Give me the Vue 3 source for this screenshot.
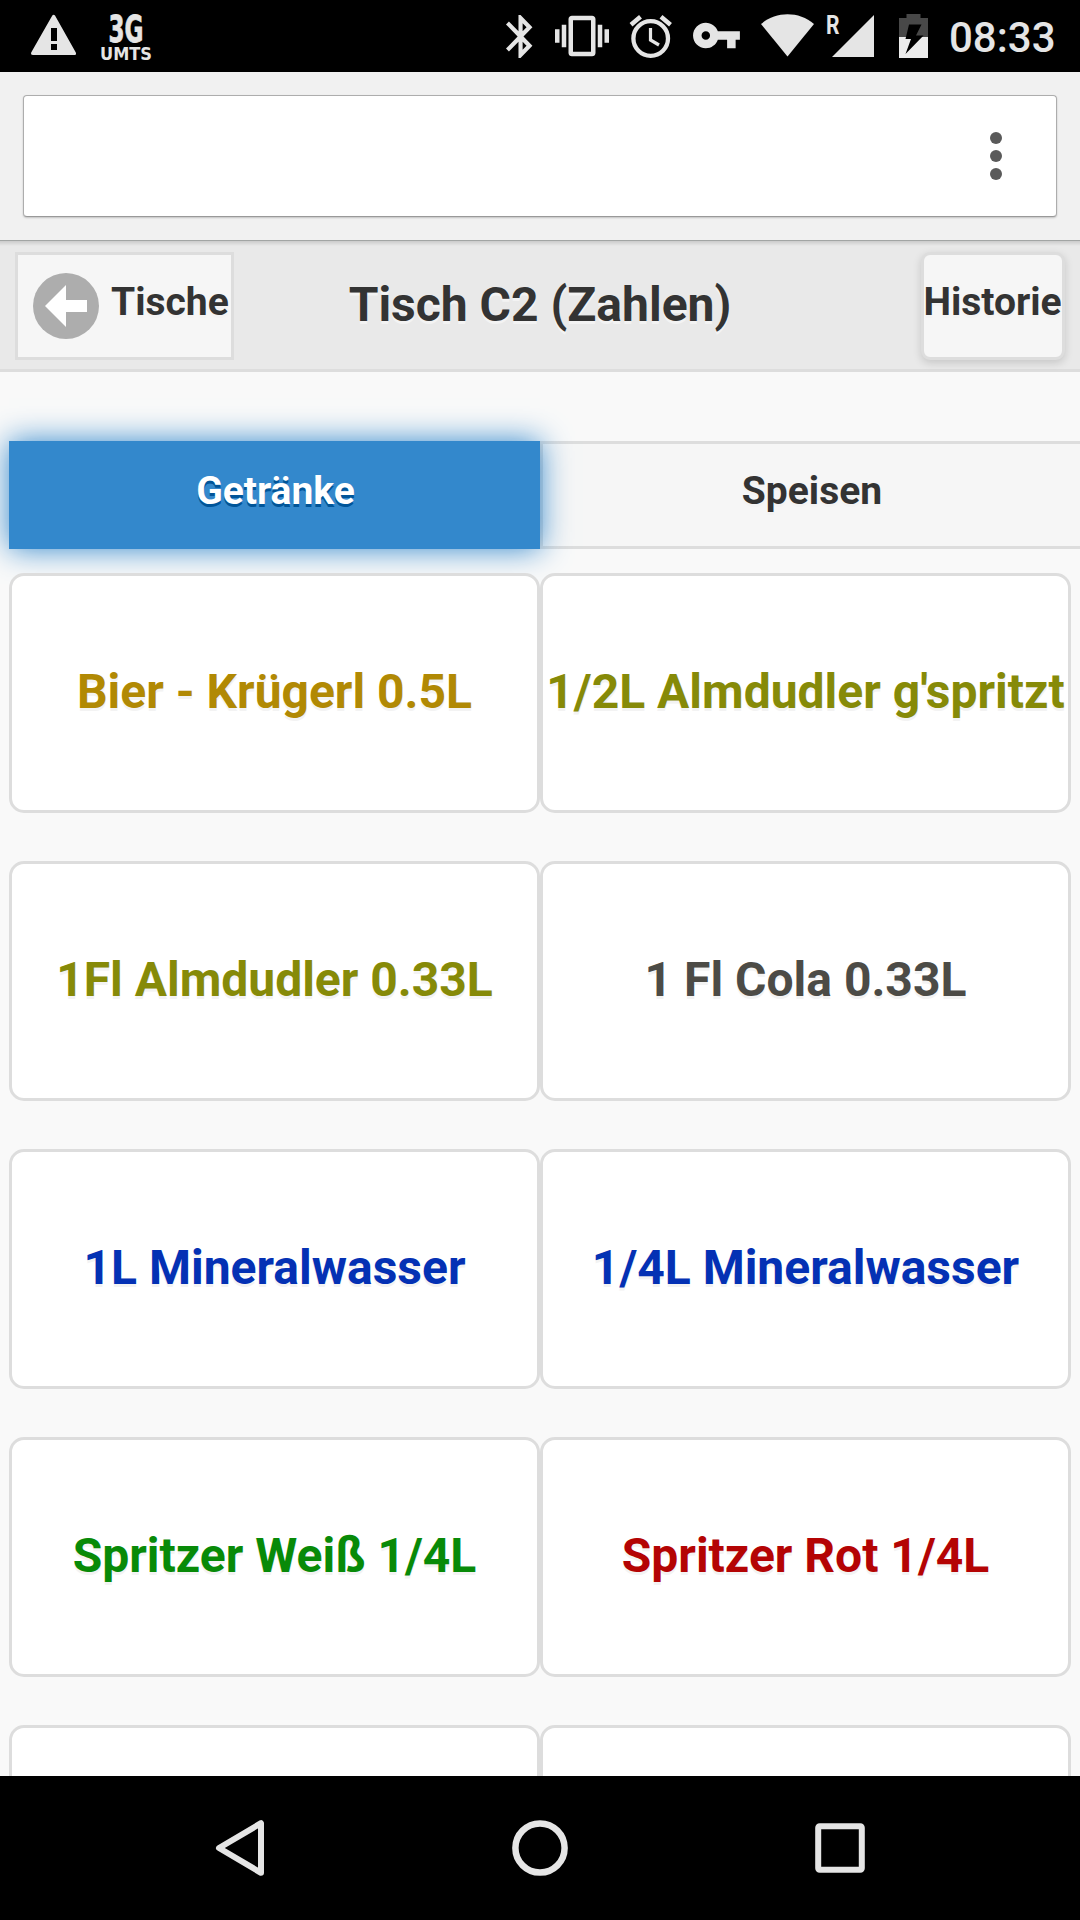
<script setup>
const products = [
  { name: 'Bier - Krügerl 0.5L', tone: 'amber' },
  { name: "1/2L Almdudler g'spritzt", tone: 'olive' },
  { name: '1Fl Almdudler 0.33L', tone: 'olive' },
  { name: '1 Fl Cola 0.33L', tone: 'gray' },
  { name: '1L Mineralwasser', tone: 'blue' },
  { name: '1/4L Mineralwasser', tone: 'blue' },
  { name: 'Spritzer Weiß 1/4L', tone: 'green' },
  { name: 'Spritzer Rot 1/4L', tone: 'red' },
  { name: '', tone: 'gray' },
  { name: '', tone: 'gray' },
]
</script>

<template>
  <div class="screen">
    <div class="status">
      <div class="group">
        <svg width="90" height="72" viewBox="0 0 90 72">
          <path fill-rule="evenodd" d="M52.300 15.600Q53.600 14 55 15.600L75.800 52.500Q76.800 55 74.500 55H33Q30.500 55 31.200 52.500ZM51 28V41H57V28ZM51 44V50H57V44Z" />
        </svg>
        <svg width="80" height="72" viewBox="90 0 80 72">
          <text class="net heavy" x="108.500" y="41.500" font-size="38" textLength="35" lengthAdjust="spacingAndGlyphs">3G</text>
          <text class="net" x="100" y="60" font-size="17.500" textLength="52" lengthAdjust="spacingAndGlyphs">UMTS</text>
        </svg>
      </div>
      <div class="group">
        <svg width="60" height="72" viewBox="485 0 60 72">
          <path transform="translate(495.600 10.700) scale(2.080 2.150)" d="M17.71 7.71L12 2h-1v7.590L6.410 5 5 6.410 10.590 12 5 17.590 6.410 19 11 14.410V22h1l5.710-5.710-4.300-4.290 4.300-4.290zM13 5.830l1.880 1.880L13 9.590V5.830zm1.880 10.460L13 18.170v-3.760l1.880 1.880z" />
        </svg>
        <svg width="75" height="72" viewBox="545 0 75 72">
          <path transform="translate(555 9) scale(2.250)" d="M0 15h2V9H0v6zm3 2h2V7H3v10zm19-8v6h2V9h-2zm-3 8h2V7h-2v10zM16.500 3h-9C6.670 3 6 3.670 6 4.500v15c0 .83.67 1.500 1.500 1.500h9c.83 0 1.500-.67 1.500-1.500v-15c0-.83-.67-1.500-1.500-1.500zM16 19H8V5h8v14z" />
        </svg>
        <svg width="62" height="72" viewBox="620 0 62 72">
          <g class="line">
            <circle cx="650.700" cy="38.500" r="17.300" stroke-width="4.300" />
            <path d="M650.500 28V40L659 45" stroke-width="3.200" />
            <path d="M631 24.700L640.500 16.800M661 16.800L670.500 24.700" stroke-width="4.500" />
          </g>
        </svg>
        <svg width="68" height="72" viewBox="682 0 68 72">
          <path transform="translate(690.900 10) scale(2.130)" d="M12.650 10C11.830 7.670 9.610 6 7 6c-3.310 0-6 2.690-6 6s2.690 6 6 6c2.610 0 4.830-1.670 5.650-4H17v4h4v-4h2v-4H12.650zM7 14c-1.100 0-2-.9-2-2s.9-2 2-2 2 .9 2 2-.9 2-2 2z" />
        </svg>
        <svg width="70" height="72" viewBox="750 0 70 72">
          <path d="M787.500 56.500L761 24C776 11 799 11 814 24Z" />
        </svg>
        <svg width="65" height="72" viewBox="820 0 65 72">
          <text class="roam" x="826" y="33.500" font-size="25" textLength="13.500" lengthAdjust="spacingAndGlyphs">R</text>
          <path d="M832 57H874V15Z" />
        </svg>
        <svg width="64" height="72" viewBox="885 0 64 72">
          <path fill="#484848" d="M899 37V18H906.500V14H920.500V18H928V37Z" />
          <path fill="#ececec" d="M899 37H928V58H899Z" />
          <path fill="#000" d="M909 24.500H921.500L916 35.500H923.500L905.500 54L911 39H905.500Z" />
        </svg>
        <span class="clock">08:33</span>
      </div>
    </div>

    <div class="browser">
      <div class="omnibox">
        <svg width="12" height="48" viewBox="0 0 12 48" fill="#5a5a5a">
          <circle cx="6" cy="6" r="6" /><circle cx="6" cy="24" r="6" /><circle cx="6" cy="42" r="6" />
        </svg>
      </div>
    </div>

    <header class="header">
      <a class="btn back">
        <svg width="66" height="66" viewBox="0 0 66 66">
          <circle cx="33" cy="33" r="33" fill="#adadad" />
          <path fill="#fff" d="M12 33L33 12V27H54V39H33V54Z" />
        </svg>
        <span>Tische</span>
      </a>
      <h1>Tisch C2 (Zahlen)</h1>
      <a class="btn history"><span>Historie</span></a>
    </header>

    <main class="content">
      <nav class="tabs">
        <a class="tab active">Getränke</a>
        <a class="tab">Speisen</a>
      </nav>
      <div class="grid">
        <div v-for="(p, i) in products" :key="i" class="card" :class="p.tone">{{ p.name }}</div>
      </div>
    </main>

    <div class="navbar">
      <svg width="60" height="60" viewBox="0 0 60 60" class="line" stroke-width="6">
        <path stroke-linejoin="round" d="M9 30L51 5.200V54.800Z" />
      </svg>
      <svg width="60" height="60" viewBox="0 0 60 60" class="line" stroke-width="6.500">
        <circle cx="30" cy="30" r="24.600" />
      </svg>
      <svg width="60" height="60" viewBox="0 0 60 60" class="line" stroke-width="6">
        <rect x="8.200" y="8.200" width="43.600" height="43.600" rx="1.500" />
      </svg>
    </div>
  </div>
</template>

<style>
body {
  margin: 0;
}
</style>

<style scoped>
.screen {
  width: 1080px;
  height: 1920px;
  display: flex;
  flex-direction: column;
  overflow: hidden;
  background: #f9f9f9;
  color: #333;
  font-family: Roboto, sans-serif;
  font-weight: 700;
}
.screen * {
  box-sizing: border-box;
}
svg {
  display: block;
  flex: none;
}
.status {
  flex: none;
  height: 72px;
  background: #000;
  color: #e5e5e5;
  fill: #e5e5e5;
  display: flex;
  justify-content: space-between;
}
.group {
  display: flex;
}
.group:last-child {
  width: 595px;
}
.net {
  font-family: "DejaVu Sans", sans-serif;
  font-weight: 700;
}
.heavy {
  stroke: #e5e5e5;
  stroke-width: 0.8px;
}
.roam {
  font-weight: 700;
}
.line {
  fill: none;
  stroke: #e5e5e5;
}
.clock {
  font-size: 42px;
  font-weight: 500;
  line-height: 76px;
}
.browser {
  flex: none;
  height: 168px;
  padding: 23px 23px 22px;
  background: #f1f1f1;
}
.omnibox {
  height: 122px;
  border: 1px solid #adadad;
  border-bottom-color: #999;
  border-radius: 4px;
  background: #fff;
  box-shadow: 0 1px 2px rgba(0, 0, 0, 0.2);
  display: flex;
  justify-content: flex-end;
  padding: 36px 54px 0 0;
}
.header {
  flex: none;
  height: 132px;
  border-top: 1px solid #a2a5a4;
  border-bottom: 3px solid #ddd;
  padding: 11px 15px 0;
  background: linear-gradient(#cbcbcb, #e9e9e9 5px);
  display: flex;
  justify-content: space-between;
  text-shadow: 0 3px 0 #f3f3f3;
}
.btn {
  height: 108px;
  border: 3px solid #ddd;
  background: #f6f6f6;
  display: flex;
  font-size: 39px;
  line-height: 44px;
  white-space: nowrap;
}
.back {
  width: 219px;
  padding: 18px 0 0 15px;
}
.back span {
  margin: 7px 0 0 12px;
}
.back span,
.history span {
  height: 44px;
}
.history {
  width: 144px;
  border-radius: 9px;
  box-shadow: 0 3px 9px rgba(0, 0, 0, 0.15);
  justify-content: center;
  padding: 25px 1px 0 0;
}
h1 {
  margin: 25px 150px 0 75px;
  width: 462px;
  font-size: 48px;
  line-height: 56px;
  text-align: center;
  flex: none;
}
.content {
  flex: 1;
  min-height: 0;
  overflow: hidden;
  padding-top: 69px;
}
.tabs {
  display: flex;
  margin-left: 9px;
}
.tab {
  flex: none;
  width: 544px;
  height: 108px;
  border: 3px solid #ddd;
  background: #f6f6f6;
  font-size: 39px;
  line-height: 44px;
  padding-top: 25px;
  text-align: center;
  text-shadow: 0 3px 0 #f3f3f3;
}
.active {
  width: 531px;
  padding-left: 2px;
  position: relative;
  border-color: #38c;
  background: #38c;
  color: #fff;
  text-shadow: 0 3px 0 #059;
  box-shadow: 0 0 29px #38c;
}
.grid {
  position: relative;
  display: grid;
  grid-template-columns: 531px 531px;
  grid-auto-rows: 240px;
  row-gap: 48px;
  padding: 24px 9px 0;
}
.card {
  border: 3px solid #ddd;
  border-radius: 15px;
  background: #fff;
  display: flex;
  align-items: center;
  justify-content: center;
  padding-bottom: 4px;
  font-size: 48px;
  white-space: nowrap;
  text-shadow: 0 3px 0 #f3f3f3;
}
.amber { color: #b18904; }
.olive { color: #868a08; }
.gray { color: #4c4b46; }
.blue { color: #0431b4; }
.green { color: #088a08; }
.red { color: #b40404; }
.navbar {
  flex: none;
  height: 144px;
  background: #000;
  display: flex;
  align-items: center;
  justify-content: space-between;
  padding: 0 210px;
}
</style>
